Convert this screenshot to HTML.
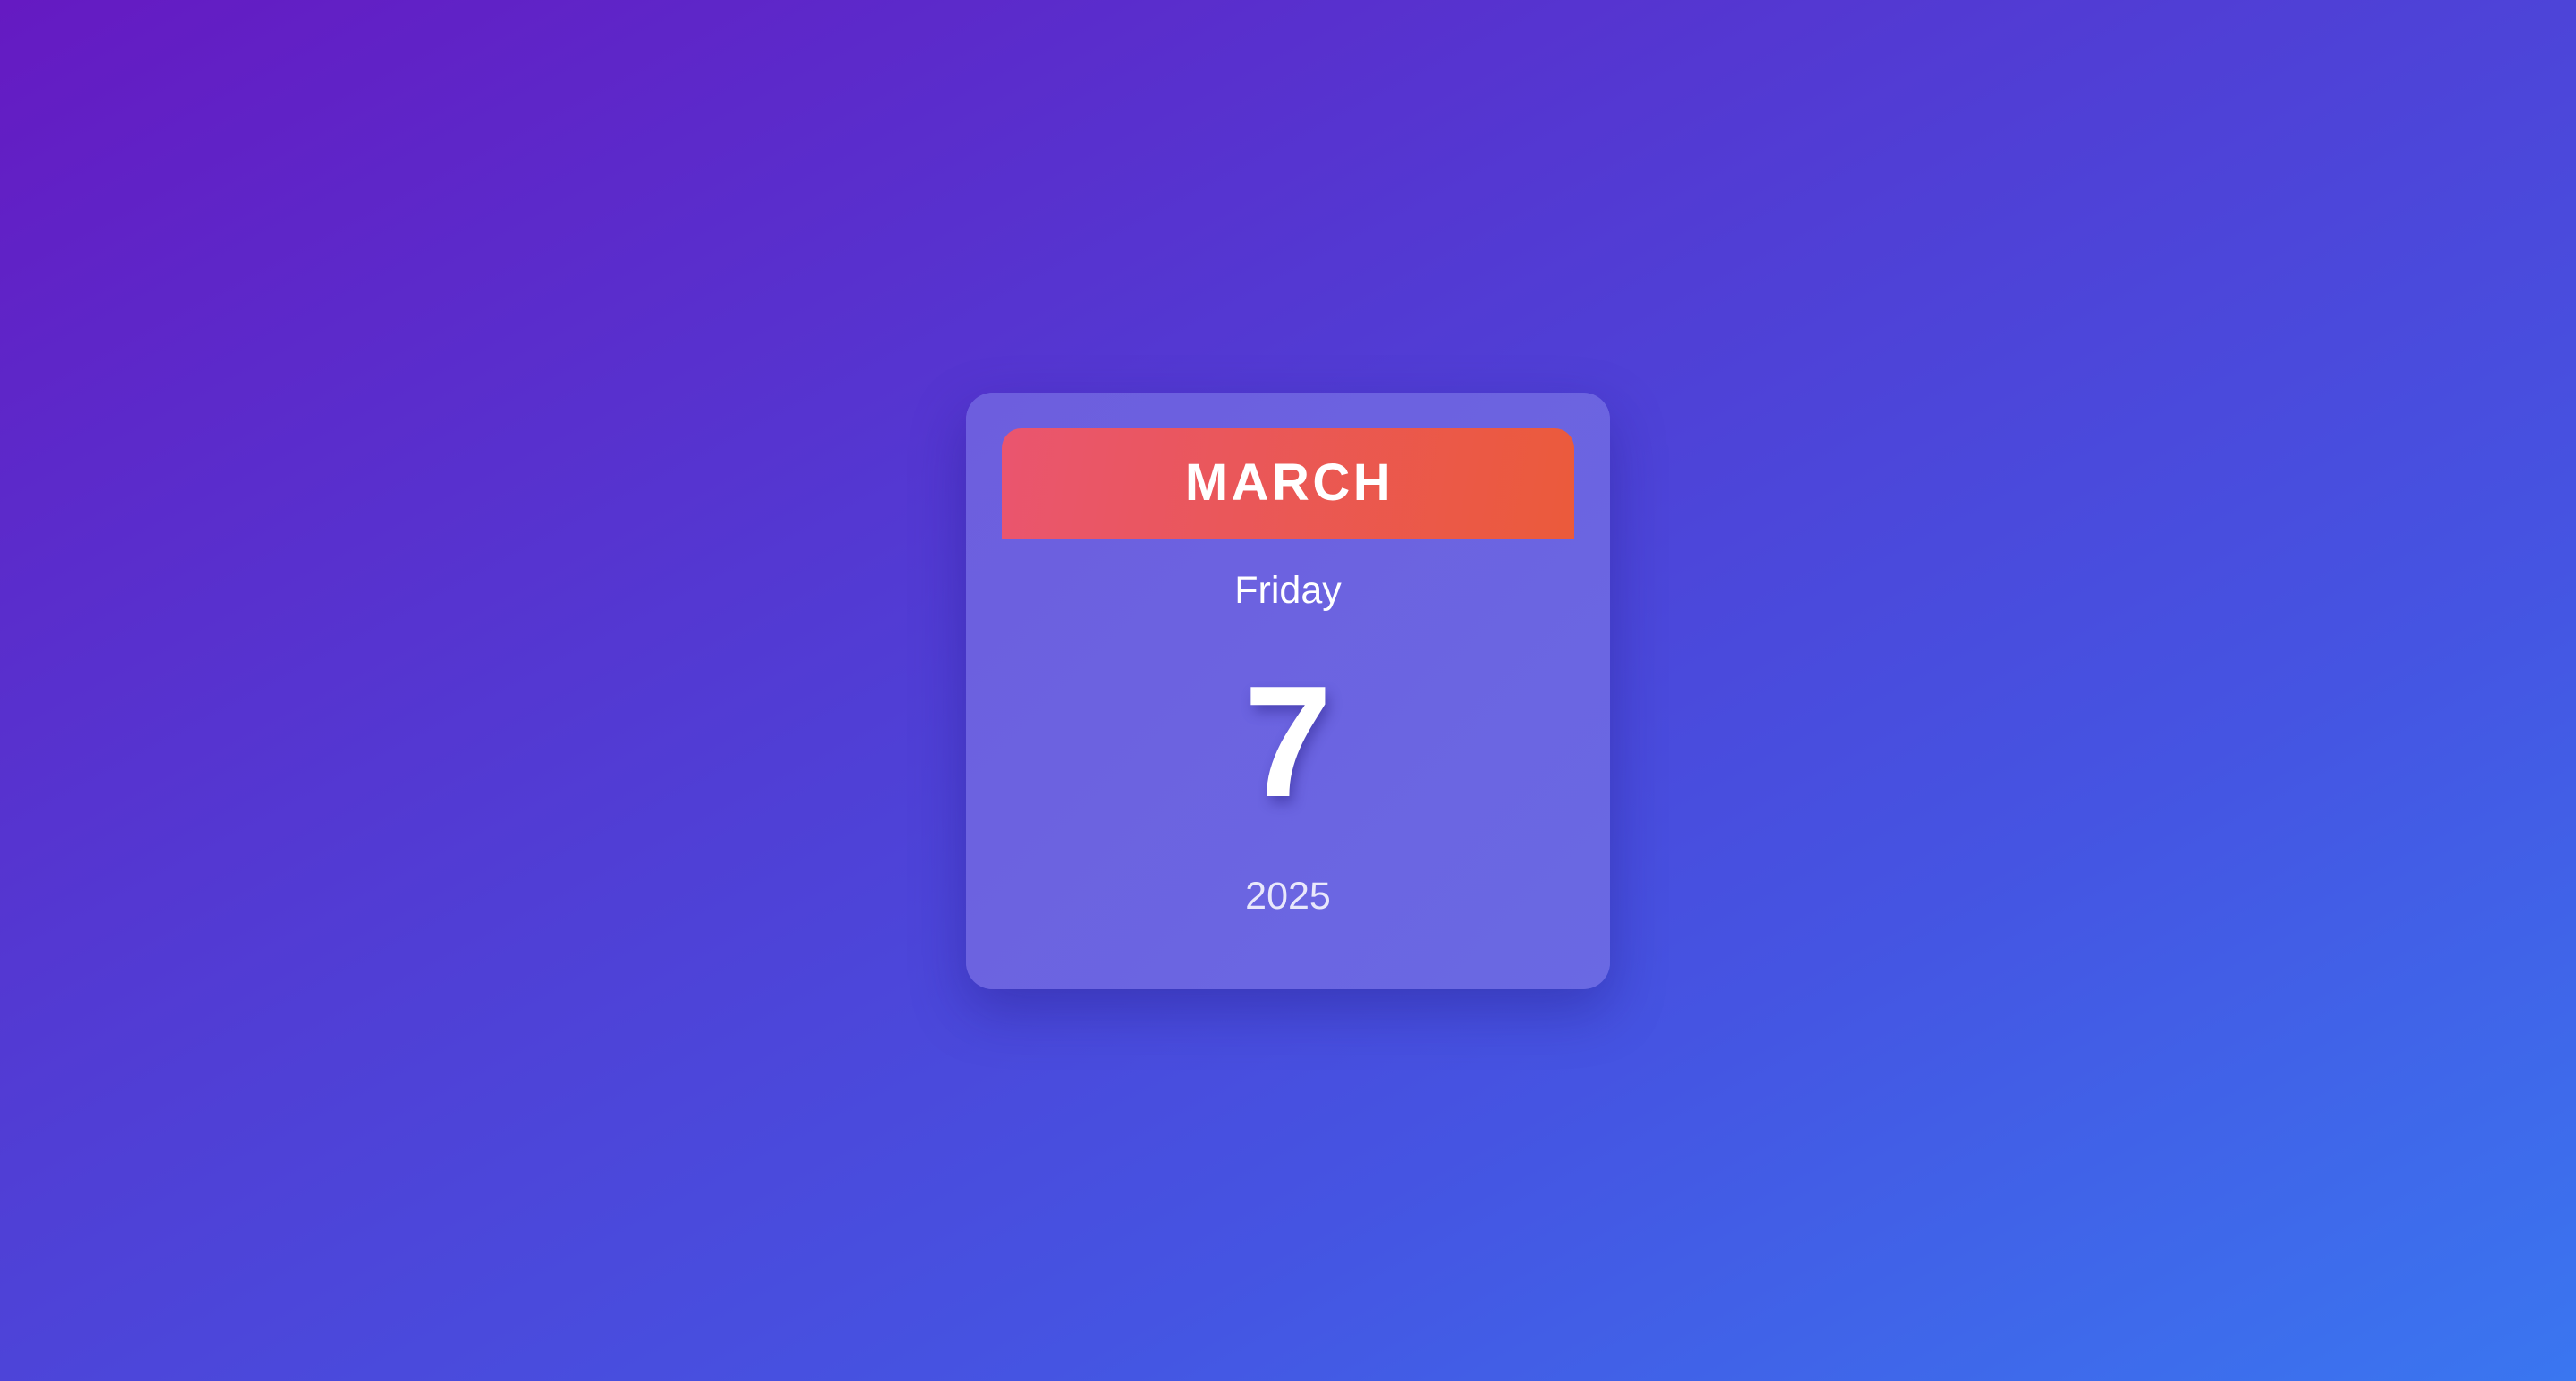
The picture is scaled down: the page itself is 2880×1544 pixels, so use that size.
<!DOCTYPE html>
<html><head><style>
html,body{margin:0;padding:0;}
body{width:2880px;height:1544px;overflow:hidden;position:relative;
background:linear-gradient(152deg,#651ac2 0%,#4f40d6 45%,#4554e2 70%,#3a76f0 100%);
font-family:"Liberation Sans",Arial,sans-serif;}
.card{position:absolute;left:1080px;top:439px;width:720px;height:667px;border-radius:30px;
background:rgba(255,255,255,0.15);box-shadow:0 24px 60px rgba(30,20,120,0.35);}
.card:before{content:"";position:absolute;inset:0;border-radius:30px;background:linear-gradient(135deg,#6d5ede,#6a69e3);}
.hdr{position:absolute;left:40px;top:40px;width:640px;height:124px;border-radius:22px 22px 0 0;
background:linear-gradient(100deg,#ea556f,#eb5a3b);}
.t{position:absolute;left:0;width:720px;text-align:center;color:#fff;line-height:1;}
</style></head><body>
<div class="card">
<div class="hdr"></div>
<div class="t" style="top:72px;font-size:58px;font-weight:bold;letter-spacing:3.5px;padding-left:3px;box-sizing:border-box;">MARCH</div>
<div class="t" style="top:200px;font-size:43px;">Friday</div>
<div class="t" style="top:302px;font-size:177px;font-weight:bold;text-shadow:4px 8px 14px rgba(40,30,130,0.45);">7</div>
<div class="t" style="top:542px;font-size:43px;color:rgba(255,255,255,0.85);">2025</div>
</div>
</body></html>
